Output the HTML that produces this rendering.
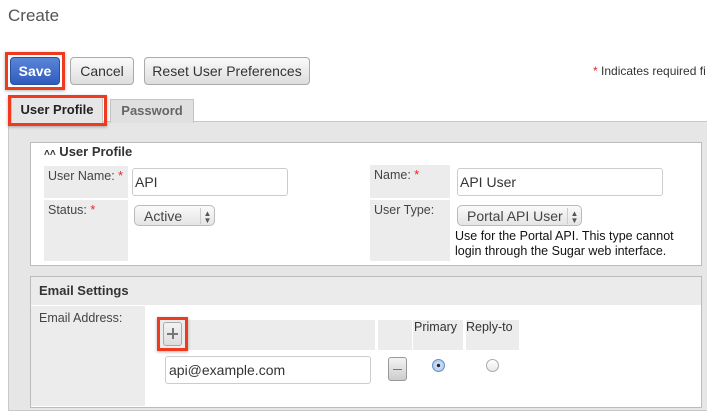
<!DOCTYPE html>
<html><head><style>
*{box-sizing:border-box;margin:0;padding:0}
body{width:707px;height:407px;overflow:hidden;background:#fff;font-family:"Liberation Sans",sans-serif;font-size:13px;color:#333;position:relative}
.a{position:absolute}
.btn{position:absolute;border:1px solid #aaa;border-radius:4px;background:linear-gradient(#fafafa,#ddd);font-size:14px;color:#333;text-align:center;line-height:26px}
.red{position:absolute;border:3px solid #f03a1f;box-shadow:0 1px 3px rgba(0,0,0,.3)}
.lbl{position:absolute;background:#ececec;padding:3px 4px;font-size:12.5px;color:#444;white-space:nowrap}
.inp{position:absolute;border:1px solid #ccc;border-radius:3px;background:#fff;padding:6px 6px;font-size:14px;color:#333}
.sel{position:absolute;border:1px solid #bbb;border-radius:5px;background:linear-gradient(#fafafa,#e4e4e4);font-size:14px;color:#444;line-height:20px;padding-left:9px}
.sel i{position:absolute;right:0;top:2px;width:14px;height:16px;border-left:1px solid #ccc;font-style:normal;font-size:8px;line-height:7px;text-align:center;padding-top:2px;color:#555}
.star{color:#e22}
</style></head><body>
<div class="a" style="left:8px;top:6px;font-size:17px;color:#555">Create</div>

<div class="red" style="left:5px;top:52px;width:60px;height:38px"></div>
<div class="btn" style="left:10px;top:57px;width:50px;height:28px;background:linear-gradient(#5b85d8,#2f5cbf);border-color:#2a4f9e;color:#fff;font-weight:bold">Save</div>
<div class="btn" style="left:70px;top:57px;width:64px;height:28px">Cancel</div>
<div class="btn" style="left:144px;top:57px;width:166px;height:28px">Reset User Preferences</div>
<div class="a" style="left:593px;top:64px;font-size:12px;color:#333;white-space:nowrap"><span class="star">*</span> Indicates required fi</div>

<div class="a" style="left:8px;top:121px;width:710px;height:290px;background:#e6e6e6;border:1px solid #c8c8c8"></div>
<div class="a" style="left:110px;top:99px;width:84px;height:24px;background:#e0e0e0;border:1px solid #c4c4c4;border-bottom:none;font-weight:bold;color:#666;text-align:center;line-height:21px">Password</div>
<div class="a" style="left:11px;top:97px;width:92px;height:26px;background:#e6e6e6;border:1px solid #c4c4c4;border-bottom:none;font-weight:bold;color:#222;text-align:center;line-height:24px">User Profile</div>
<div class="red" style="left:8px;top:95px;width:99px;height:31px"></div>

<div class="a" style="left:30px;top:142px;width:672px;height:124px;background:#fff;border:1px solid #bbb"></div>
<div class="a" style="left:44px;top:144px;font-weight:bold;color:#333"><span style="font-size:10px">&#x2C4;&#x2C4;</span> User Profile</div>
<div class="lbl" style="left:44px;top:166px;width:84px;height:32px">User Name: <span class="star">*</span></div>
<div class="lbl" style="left:44px;top:200px;width:84px;height:61px">Status: <span class="star">*</span></div>
<div class="inp" style="left:132px;top:168px;width:156px;height:28px;padding:5px 2px">API</div>
<div class="sel" style="left:134px;top:205px;width:81px;height:21px">Active<i>▲<br>▼</i></div>
<div class="lbl" style="left:370px;top:165px;width:80px;height:33px">Name: <span class="star">*</span></div>
<div class="lbl" style="left:370px;top:200px;width:80px;height:61px">User Type:</div>
<div class="inp" style="left:457px;top:168px;width:206px;height:28px;padding:5px 2px">API User</div>
<div class="sel" style="left:457px;top:205px;width:125px;height:21px">Portal API User<i>▲<br>▼</i></div>
<div class="a" style="left:455px;top:229px;font-size:12.5px;color:#111;line-height:15px">Use for the Portal API. This type cannot<br>login through the Sugar web interface.</div>

<div class="a" style="left:30px;top:276px;width:672px;height:132px;background:#fff;border:1px solid #bbb"></div>
<div class="a" style="left:31px;top:277px;width:670px;height:28px;background:#ebebeb;font-weight:bold;padding:6px 8px;color:#333">Email Settings</div>
<div class="lbl" style="left:31px;top:306px;width:114px;height:100px;padding:5px 8px">Email Address:</div>
<div class="a" style="left:157px;top:320px;width:218px;height:30px;background:#ececec"></div>
<div class="a" style="left:378px;top:320px;width:34px;height:30px;background:#ececec"></div>
<div class="a" style="left:413px;top:320px;width:50px;height:30px;background:#ececec;font-size:12.5px;padding:0 1px">Primary</div>
<div class="a" style="left:466px;top:320px;width:53px;height:30px;background:#ececec;font-size:12.5px;padding:0 0">Reply-to</div>
<div class="a" style="left:163px;top:322px;width:19px;height:24px;border:1px solid #aaa;border-radius:3px;background:linear-gradient(#f4f4f4,#ddd)"><div class="a" style="left:3px;top:10px;width:11px;height:1.5px;background:#777"></div><div class="a" style="left:8px;top:5px;width:1.5px;height:11px;background:#777"></div></div>
<div class="red" style="left:157px;top:317px;width:31px;height:34px"></div>
<div class="inp" style="left:165px;top:356px;width:206px;height:28px;padding:5px 3px">api@example.com</div>
<div class="a" style="left:388px;top:357px;width:19px;height:24px;border:1px solid #999;border-radius:3px;background:linear-gradient(#f4f4f4,#ccc)"><div class="a" style="left:4px;top:11px;width:9px;height:1px;background:#777"></div></div>
<div class="a" style="left:432px;top:359px;width:13px;height:13px;border-radius:50%;border:1px solid #6a8fc6;background:radial-gradient(#222 18%,#cfe0f7 25%,#9fbde8)"></div>
<div class="a" style="left:486px;top:359px;width:13px;height:13px;border-radius:50%;border:1px solid #aaa;background:linear-gradient(#fff,#e8e8e8)"></div>
</body></html>
